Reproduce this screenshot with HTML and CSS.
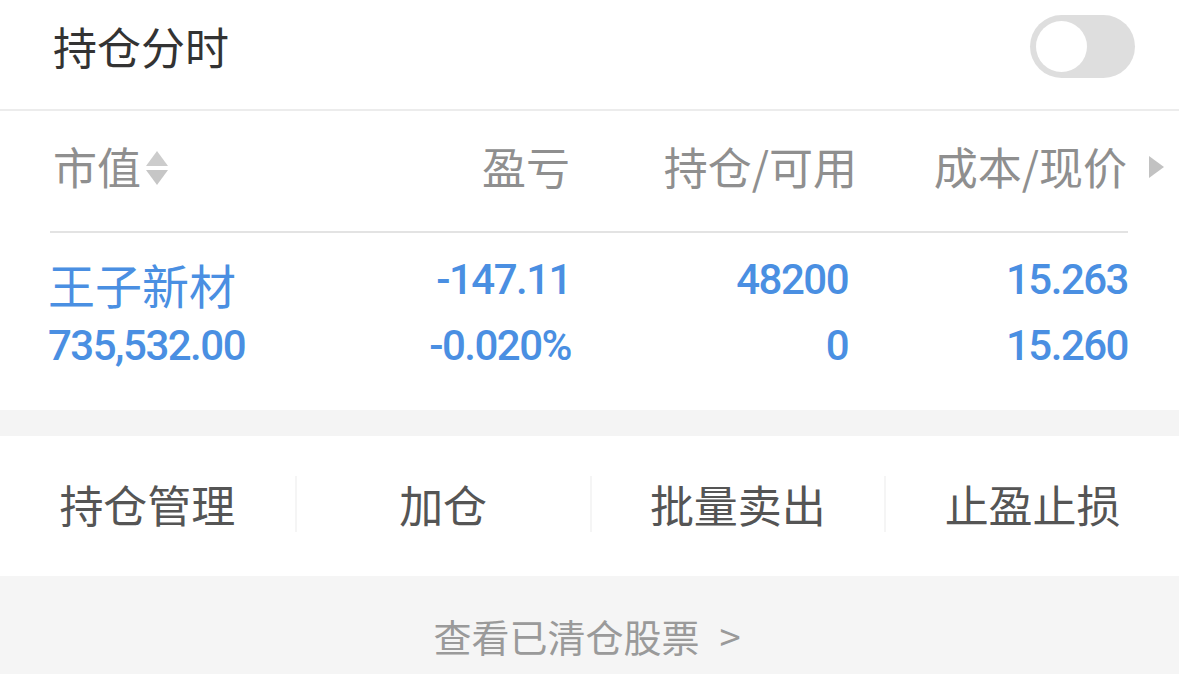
FILE: index.html
```html
<!DOCTYPE html>
<html lang="zh-CN">
<head>
    <meta charset="UTF-8">
    <meta name="viewport" content="width=device-width, initial-scale=1.0">
    <title>持仓分时</title>
    <link rel="stylesheet" href="styles.css">
</head>
<body>

    <div class="top-bar">
        <span class="title">持仓分时</span>
        <div class="switch"><span class="knob"></span></div>
    </div>

    <div class="head-row">
        <div class="col first">市值<span class="sort"><i class="up"></i><i class="down"></i></span></div>
        <div class="col">盈亏</div>
        <div class="col">持仓/可用</div>
        <div class="col">成本/现价</div>
        <span class="more"></span>
    </div>

    <div class="holdings">
        <div class="data-row">
            <div class="cell name">王子新材</div>
            <div class="cell num">-147.11</div>
            <div class="cell num">48200</div>
            <div class="cell num">15.263</div>
        </div>
        <div class="data-row">
            <div class="cell num left">735,532.00</div>
            <div class="cell num">-0.020%</div>
            <div class="cell num">0</div>
            <div class="cell num">15.260</div>
        </div>
    </div>

    <div class="gap"></div>

    <div class="actions">
        <div class="action">持仓管理</div>
        <div class="action">加仓</div>
        <div class="action">批量卖出</div>
        <div class="action">止盈止损</div>
    </div>

    <div class="footer">
        <span class="link">查看已清仓股票<span class="arrow">&gt;</span></span>
    </div>

</body>
</html>
```

FILE: styles.css
```css
body {
    margin: 0;
    background-color: #ffffff;
    font-family: "Noto Sans CJK SC", "Noto Sans", sans-serif;
    overflow: hidden;
}
.top-bar {
    height: 109px;
    display: flex;
    align-items: center;
    justify-content: space-between;
    padding: 0 44px 0 53px;
    border-bottom: 2px solid #ececec;
}
.title {
    font-size: 44px;
    color: #333333;
    margin-top: -18px;
}
.switch {
    position: relative;
    width: 105px;
    height: 63px;
    border-radius: 32px;
    background-color: #dedede;
    margin-top: -16px;
}
.knob {
    position: absolute;
    left: 6px;
    top: 6px;
    width: 51px;
    height: 51px;
    border-radius: 50%;
    background-color: #ffffff;
}
.head-row {
    position: relative;
    height: 120px;
    display: grid;
    grid-template-columns: 260px 257px 287px 270px;
    align-items: center;
    padding-left: 53px;
    font-size: 44px;
    color: #8f8f8f;
}
.col {
    text-align: right;
    margin-top: -10px;
}
.col.first {
    text-align: left;
    display: flex;
    align-items: center;
}
.sort {
    display: inline-flex;
    flex-direction: column;
    gap: 4px;
    margin-left: 5px;
    margin-top: 4px;
}
.sort i {
    width: 0;
    height: 0;
    border-left: 11px solid transparent;
    border-right: 11px solid transparent;
}
.sort .up {
    border-bottom: 15px solid #cccccc;
}
.sort .down {
    border-top: 15px solid #c6c6c6;
}
.more {
    position: absolute;
    left: 1149px;
    top: 45px;
    width: 0;
    height: 0;
    border-top: 11px solid transparent;
    border-bottom: 11px solid transparent;
    border-left: 15px solid #c2c2c2;
}
.holdings {
    margin: 0 51px 0 50px;
    border-top: 2px solid #e3e3e3;
    padding: 14px 0 31px 0;
    height: 132px;
}
.data-row {
    display: grid;
    grid-template-columns: 266px 257px 277px 280px;
    height: 66px;
    align-items: center;
    margin-left: -2px;
    color: #4a8fe2;
}
.cell {
    text-align: right;
}
.name {
    text-align: left;
    font-size: 47px;
    line-height: 47px;
    padding-top: 7px;
}
.num {
    font-family: "Roboto", "Liberation Sans", sans-serif;
    font-size: 42px;
    font-weight: 500;
    line-height: 66px;
    letter-spacing: -1.5px;
}
.num.left {
    text-align: left;
}
.gap {
    height: 26px;
    background-color: #f4f4f4;
}
.actions {
    height: 140px;
    display: grid;
    grid-template-columns: repeat(4, 1fr);
    align-items: center;
}
.action {
    text-align: center;
    font-size: 44px;
    color: #555555;
    border-left: 2px solid #f5f5f5;
    line-height: 56px;
    margin-top: -4px;
}
.action:first-child {
    border-left: none;
}
.footer {
    height: 99px;
    background-color: #f5f5f5;
    display: flex;
    align-items: center;
    justify-content: center;
}
.link {
    font-size: 38px;
    color: #9a9a9a;
    margin-left: -5px;
    padding-top: 20px;
}
.arrow {
    margin-left: 20px;
}
```
